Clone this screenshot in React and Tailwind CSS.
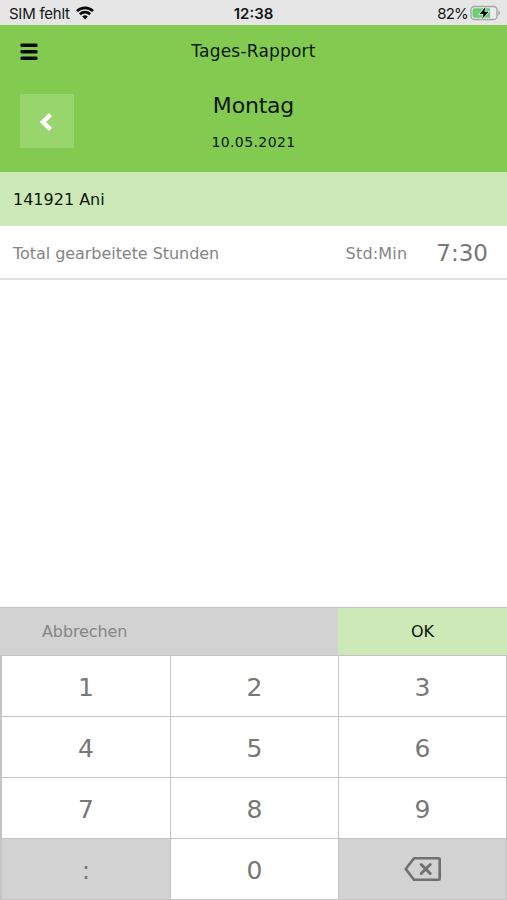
const keys = ['1', '2', '3', '4', '5', '6', '7', '8', '9', ':', '0', 'del'];

function Wifi() {
  return (
    <svg className="mb-[2px] ml-[6px] h-[14px] w-[18px]" viewBox="0 0 18 14" fill="none" stroke="#080808" strokeWidth="2.7">
      <path d="M1 5.1a11.5 11.5 0 0 1 16 0" />
      <path d="M3.9 8.3a7.3 7.3 0 0 1 10.2 0" />
      <path d="M6.2 10.5a4 4 0 0 1 5.6 0L9 13.4Z" fill="#080808" stroke="none" />
    </svg>
  );
}

function Battery() {
  return (
    <svg className="mb-[2px] ml-[2px] h-[16px] w-[31px]" viewBox="0 0 31 16">
      <rect x="1" y="1.5" width="26" height="13" rx="3.5" fill="#ececec" stroke="#a3a3a3" strokeWidth="1.3" />
      <path d="M4.5 3.2H20v9.6H4.5a2 2 0 0 1-2-2V5.2a2 2 0 0 1 2-2Z" fill="#67d071" />
      <path d="M28.4 5.5c2 .8 2 4.2 0 5Z" fill="#a3a3a3" />
      <path d="M15.5 2 9.5 9h4l-1.3 5 6.3-7.3h-4.1Z" fill="#050505" stroke="#e9f5e9" strokeWidth="1.4" paintOrder="stroke" />
    </svg>
  );
}

function Backspace() {
  return (
    <svg className="mb-[3px] h-[26px] w-[38px]" viewBox="0 0 38 26" fill="none" stroke="#707070" strokeWidth="2.6" strokeLinejoin="round" strokeLinecap="round">
      <path d="M10 2.2h24.5a1.2 1.2 0 0 1 1.2 1.2v19.2a1.2 1.2 0 0 1-1.2 1.2H10L1.7 13Z" />
      <path d="m17.2 8.500 9 9m0-9-9 9" strokeWidth="3" />
    </svg>
  );
}

export default function App() {
  return (
    <div className="flex h-[900px] w-[507px] flex-col overflow-hidden bg-white font-['DejaVu_Sans',sans-serif] text-[#0d160a]">
      <div className="grid h-[25px] shrink-0 grid-cols-3 items-center bg-[#e6e6e6] pt-[2px] font-['Inter',sans-serif] text-[15px] leading-[20px] text-[#151515]">
        <div className="flex items-center pl-[9px]">
          <span className="tracking-[-0.25px]">SIM fehlt</span>
          <Wifi />
        </div>
        <div className="text-center font-semibold">12:38</div>
        <div className="flex items-center justify-end pr-[6px]">
          <span className="tracking-[-0.8px]">82%</span>
          <Battery />
        </div>
      </div>

      <header className="h-[147px] shrink-0 bg-[#83cb50]">
        <div className="grid h-[53px] grid-cols-[60px_1fr_60px] items-center">
          <svg className="ml-[20px] mt-px h-[18px] w-[18px]" viewBox="0 0 18 18" fill="#050a03">
            <rect x="0.5" y="0.5" width="17" height="3.5" rx="1" />
            <rect x="0.5" y="7" width="17" height="3.5" rx="1" />
            <rect x="0.5" y="13.5" width="17" height="3.5" rx="1" />
          </svg>
          <h1 className="text-center text-[17px] tracking-[0.2px]">Tages-Rapport</h1>
        </div>
        <div className="grid grid-cols-[74px_1fr_74px] pt-[16px]">
          <button className="ml-[20px] flex size-[54px] items-center justify-center bg-[#98d56c]">
            <svg className="mr-[2px] mt-px h-[20px] w-[16px]" viewBox="0 0 16 20" fill="none" stroke="white" strokeWidth="4.5">
              <path d="M12.5 2.5 5 10l7.5 7.5" />
            </svg>
          </button>
          <div className="text-center">
            <div className="text-[22px] leading-[24px] tracking-[-0.2px]">Montag</div>
            <div className="mt-[14px] text-[14px] leading-[20px] tracking-[0.4px]">10.05.2021</div>
          </div>
        </div>
      </header>

      <div className="flex h-[54px] shrink-0 items-center bg-[#cce9b7] pl-[13px] pt-[2px] text-[16px]">141921 Ani</div>
      <div className="flex h-[54px] shrink-0 items-center border-b-2 border-[#e0e0e0] pl-[13px] pr-[19px] pt-[3px] text-[16px] text-[#858585]">
        <span className="tracking-[-0.05px]">Total gearbeitete Stunden</span>
        <span className="ml-auto tracking-[0.2px]">Std:Min</span>
        <span className="ml-[29px] text-[23px] text-[#777]">7:30</span>
      </div>

      <div className="grow" />

      <div className="h-[293px] shrink-0 bg-[#c4c4c4] pt-px">
        <div className="grid h-[47px] grid-cols-[338px_1fr] text-[16px]">
          <button className="flex items-center bg-[#d2d2d2] pl-[42px] pt-px tracking-[-0.1px] text-[#858585]">Abbrechen</button>
          <button className="flex items-center justify-center bg-[#cce9b7] pt-px">OK</button>
        </div>
        <div className="mt-px grid h-[243px] grid-cols-[168px_167px_167px] grid-rows-4 gap-px pl-[2px] text-[25px] text-[#777]">
          {keys.map((key) => (
            <button
              key={key}
              className={`flex items-center justify-center pt-[3px] ${key === ':' || key === 'del' ? 'bg-[#d2d2d2]' : 'bg-white'}`}
            >
              {key === 'del' ? <Backspace /> : key}
            </button>
          ))}
        </div>
      </div>
    </div>
  );
}
